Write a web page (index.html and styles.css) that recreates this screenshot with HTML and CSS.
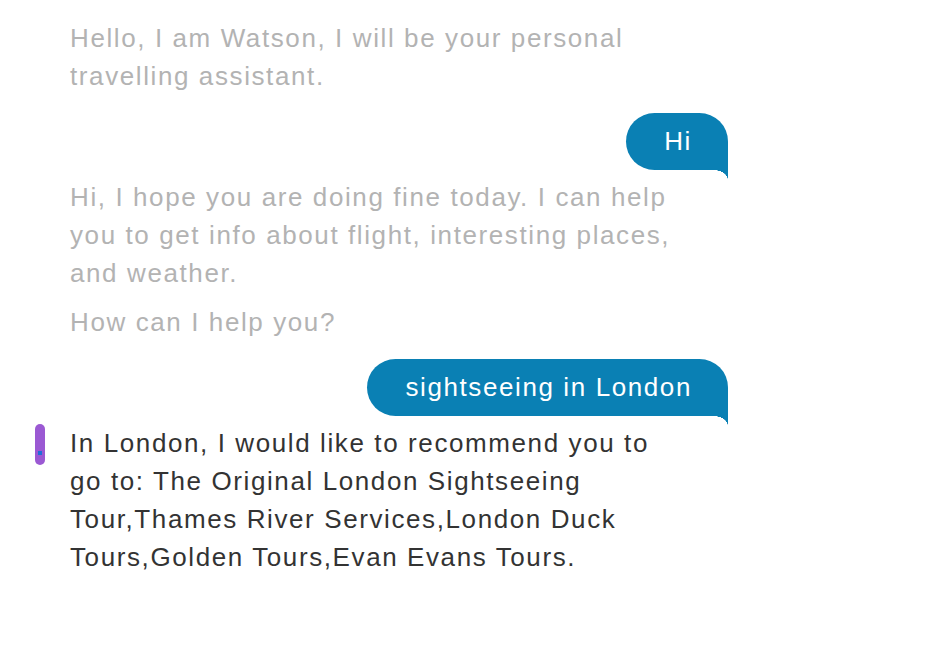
FILE: index.html
```html
<!DOCTYPE html>
<html lang="en">
<head>
<meta charset="utf-8">
<title>Watson travel assistant</title>
<link rel="stylesheet" href="styles.css">
</head>
<body>
<main class="chat">
  <div class="msg bot old">
    <p>Hello, I am Watson, I will be your personal travelling assistant.</p>
  </div>
  <div class="msg user">
    <div class="bubble">Hi</div>
  </div>
  <div class="msg bot old">
    <p>Hi, I hope you are doing fine today. I can help you to get info about flight, interesting places, and weather.</p>
    <p>How can I help you?</p>
  </div>
  <div class="msg user">
    <div class="bubble">sightseeing in London</div>
  </div>
  <div class="msg bot latest">
    <span class="marker"><span class="dot"></span></span>
    <p>In London, I would like to recommend you to go to: The Original London Sightseeing Tour,Thames River Services,London Duck Tours,Golden Tours,Evan Evans Tours.</p>
  </div>
</main>
</body>
</html>
```

FILE: styles.css
```css
html, body {
  margin: 0;
  padding: 0;
  background: #ffffff;
}
body {
  font-family: "Liberation Sans", Arial, Helvetica, sans-serif;
  font-size: 26px;
  line-height: 37.8px;
  letter-spacing: 1.6px;
}
.chat {
  width: 658px;
  padding: 20px 0 0 70px;
  display: flex;
  flex-direction: column;
}
.msg p {
  margin: 0;
}
.msg p + p {
  margin-top: 11px;
}
.bot {
  width: 606px;
  position: relative;
}
.old {
  color: #b3b3b3;
}
.latest {
  color: #333333;
}
.user {
  display: flex;
  justify-content: flex-end;
  margin: 17px 0 9px;
}
.bubble {
  position: relative;
  background: #0a80b4;
  color: #ffffff;
  padding: 10px 36px 10px 38px;
  border-radius: 29px 29px 0 29px;
}
.bubble::after {
  content: "";
  position: absolute;
  right: 0;
  top: 100%;
  width: 14px;
  height: 10px;
  background: radial-gradient(ellipse 14px 10px at 0 100%, transparent 97%, #0a80b4 100%);
}
.marker {
  position: absolute;
  left: -35px;
  top: -1px;
  width: 10px;
  height: 41px;
  border-radius: 5px;
  background: #9b59d3;
}
.dot {
  position: absolute;
  left: 3px;
  top: 27px;
  width: 4px;
  height: 4px;
  background: #1f6fd8;
}
```
